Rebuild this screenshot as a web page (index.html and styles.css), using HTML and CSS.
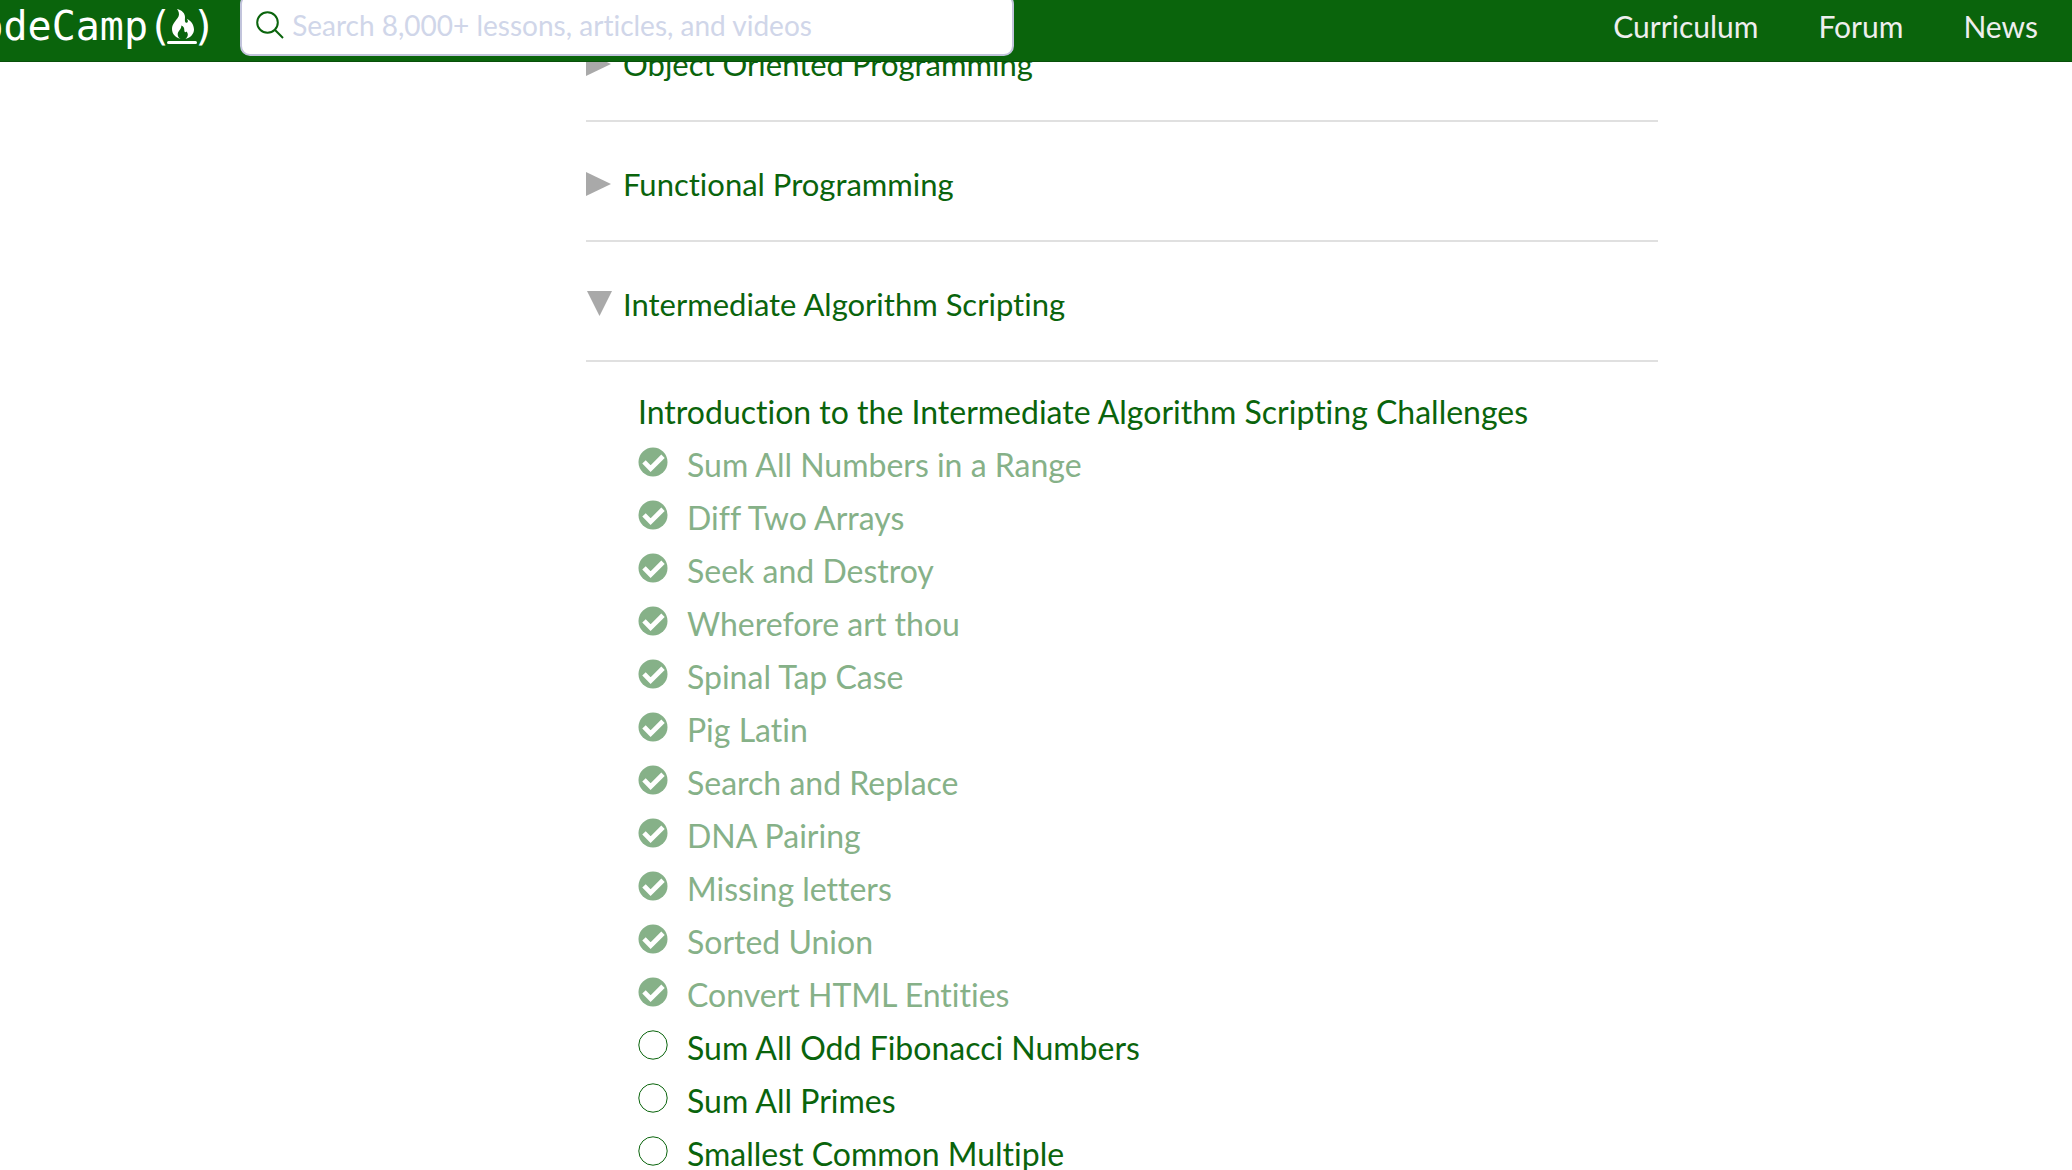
FILE: index.html
```
<!DOCTYPE html>
<html lang="en">
<head>
<meta charset="utf-8">
<meta name="viewport" content="width=device-width, initial-scale=1">
<title>Learn to code | freeCodeCamp.org</title>
<link rel="stylesheet" href="styles.css">
</head>
<body>
<svg class="defs" aria-hidden="true">
  <symbol id="passed" viewBox="0 0 30 30">
    <circle cx="15" cy="15" r="14.5" fill="currentColor"/>
    <path d="M6 14.8 L12.6 21.6 L25 9.2" fill="none" stroke="#fff" stroke-width="4.8"/>
  </symbol>
  <symbol id="open" viewBox="0 0 30 30">
    <circle cx="15" cy="15" r="14.2" fill="#fff" stroke="currentColor" stroke-width="1"/>
  </symbol>
</svg>
<div class="shell">
  <header class="site-header">
    <a class="logo" href="#"><span>freeCodeCamp(</span><svg class="flame" viewBox="0 0 30 38" aria-hidden="true">
      <path fill="#fff" d="M10 2C15 3 18.300 6.500 18 10.500C17.900 12.800 17.600 15.500 19.300 15.800C21.200 16 21.400 13.500 19.800 11.800C23.500 13.500 27 17.500 27 22.500C27 26.500 24 30.500 18.500 32C21.500 29.500 21.300 26.500 19.500 24.500C18.700 25.800 17.200 25.200 17.300 23.200C17.400 20.800 16.500 19.500 14.300 18.500C14.800 22.500 10.700 23.500 10.700 27.400C10.700 29.600 12 31.200 13.500 32C8.500 30.500 5 26.800 5 22C5 16.500 9.500 13.500 11.500 9.500C12.600 7.200 11.800 4.300 10 2Z"/>
      <path d="M1.500 35.600H28.500" stroke="#fff" stroke-width="3" stroke-linecap="round"/>
    </svg><span>)</span></a>
    <form class="search" role="search">
      <label for="q" aria-label="Search"><svg viewBox="0 0 28 28" aria-hidden="true"><circle cx="11.500" cy="11.500" r="10.300"/><path d="M18.800 18.800L27 27"/></svg></label>
      <input id="q" type="text" placeholder="Search 8,000+ lessons, articles, and videos">
    </form>
    <nav class="nav">
      <a href="#">Curriculum</a>
      <a href="#">Forum</a>
      <a href="#">News</a>
    </nav>
  </header>
  <main class="map">
    <button class="block" type="button" aria-expanded="false"><svg class="caret" viewBox="0 0 26 26"><path d="M0 1L25 13L0 25Z"/></svg>Object Oriented Programming</button>
    <button class="block" type="button" aria-expanded="false"><svg class="caret" viewBox="0 0 26 26"><path d="M0 1L25 13L0 25Z"/></svg>Functional Programming</button>
    <button class="block" type="button" aria-expanded="true"><svg class="caret" viewBox="0 0 26 26"><path d="M1 0H26L13.500 25Z"/></svg>Intermediate Algorithm Scripting</button>
    <ul class="challenges">
      <li><a href="#">Introduction to the Intermediate Algorithm Scripting Challenges</a></li>
      <li class="done"><svg><use href="#passed"/></svg><a href="#">Sum All Numbers in a Range</a></li>
      <li class="done"><svg><use href="#passed"/></svg><a href="#">Diff Two Arrays</a></li>
      <li class="done"><svg><use href="#passed"/></svg><a href="#">Seek and Destroy</a></li>
      <li class="done"><svg><use href="#passed"/></svg><a href="#">Wherefore art thou</a></li>
      <li class="done"><svg><use href="#passed"/></svg><a href="#">Spinal Tap Case</a></li>
      <li class="done"><svg><use href="#passed"/></svg><a href="#">Pig Latin</a></li>
      <li class="done"><svg><use href="#passed"/></svg><a href="#">Search and Replace</a></li>
      <li class="done"><svg><use href="#passed"/></svg><a href="#">DNA Pairing</a></li>
      <li class="done"><svg><use href="#passed"/></svg><a href="#">Missing letters</a></li>
      <li class="done"><svg><use href="#passed"/></svg><a href="#">Sorted Union</a></li>
      <li class="done"><svg><use href="#passed"/></svg><a href="#">Convert HTML Entities</a></li>
      <li><svg><use href="#open"/></svg><a href="#">Sum All Odd Fibonacci Numbers</a></li>
      <li><svg><use href="#open"/></svg><a href="#">Sum All Primes</a></li>
      <li><svg><use href="#open"/></svg><a href="#">Smallest Common Multiple</a></li>
    </ul>
  </main>
</div>
</body>
</html>
```
FILE: styles.css
```
:root {
  --green: #0a640c;
  --rule: #e0e0e0;
  --scrolled: 172px;
}

* {
  box-sizing: border-box;
}

body {
  margin: 0;
  overflow: hidden;
  background: #fff;
  color: var(--green);
  font-family: Lato, sans-serif;
  font-size: 32px;
  font-variant-ligatures: none;
}

a {
  color: inherit;
  text-decoration: none;
}

.defs {
  display: none;
}

/* The view is scrolled a little to the right, so the logo starts off screen. */
.shell {
  margin-left: calc(-1 * var(--scrolled));
}

.site-header {
  position: relative;
  z-index: 1;
  display: flex;
  align-items: flex-end;
  height: 62px;
  padding: 0 34px 5px 31px;
  background: var(--green);
  border-bottom: 1px solid #08500a;
  color: #eee;
}

.logo {
  display: flex;
  align-items: center;
  color: #fff;
  font-family: "DejaVu Sans Mono", monospace;
  font-size: 40px;
  line-height: 60px;
}

.flame {
  width: 30px;
  height: 38px;
  margin: 0 -5px;
}

.search {
  display: flex;
  align-items: center;
  width: 774px;
  height: 62px;
  margin-left: 24px;
  padding-left: 14px;
  background: #fff;
  border: 2px solid #c2c4dc;
  border-radius: 10px;
}

.search label svg {
  display: block;
  width: 28px;
  height: 28px;
  fill: none;
  stroke: var(--green);
  stroke-width: 2;
}

.search input {
  flex: 1;
  min-width: 0;
  padding: 0 8px;
  border: 0;
  outline: 0;
  background: none;
  color: var(--green);
  font: 28px/36px Lato, sans-serif;
  font-variant-ligatures: none;
}

.search input::placeholder {
  color: #d0d6e9;
  opacity: 1;
}

.nav {
  display: flex;
  gap: 60px;
  margin-left: auto;
  font-size: 30px;
  line-height: 60px;
}

.map {
  max-width: 1416px;
  margin: -60px auto 0;
  padding-left: calc(2 * var(--scrolled));
}

.block {
  display: flex;
  align-items: center;
  gap: 11px;
  width: 100%;
  height: 120px;
  padding: 6px 0 0;
  background: none;
  border: 0;
  border-bottom: 2px solid var(--rule);
  color: inherit;
  font: 31px/40px Lato, sans-serif;
  font-variant-ligatures: none;
  text-align: left;
}

.caret {
  width: 26px;
  height: 26px;
  fill: #a9a9a9;
}

.challenges {
  margin: 0;
  padding: 23px 0 0 52px;
  list-style: none;
}

.challenges li {
  display: flex;
  gap: 19px;
  line-height: 53px;
}

.challenges svg {
  width: 30px;
  height: 30px;
  margin-top: 9px;
}

.done {
  color: #86b188;
}
```
